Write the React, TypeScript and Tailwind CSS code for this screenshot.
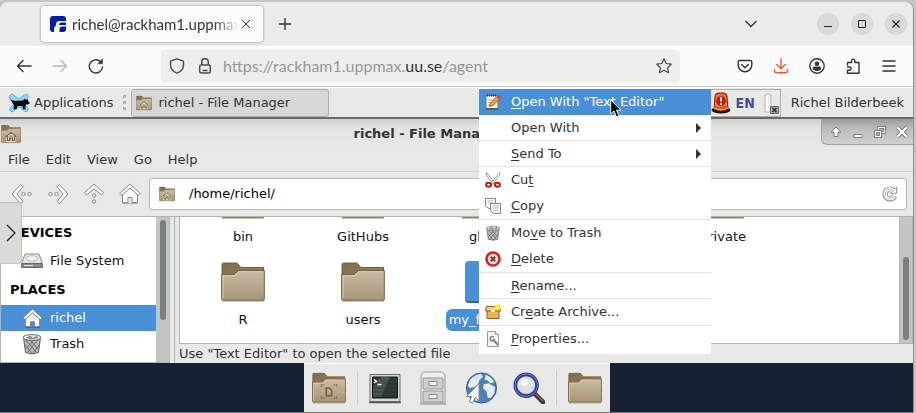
import React from "react";

type Shape = { className?: string };

function FolderShape({ className = "", emblem }: Shape & { emblem?: "home" | "doc" }) {
  return (
    <svg viewBox="0 0 44 40" className={className} aria-hidden="true">
      <defs>
        <linearGradient id="folderFront" x1="0" y1="0" x2="0" y2="1">
          <stop offset="0" stopColor="#c9bda8" />
          <stop offset="1" stopColor="#a89574" />
        </linearGradient>
        <linearGradient id="folderBack" x1="0" y1="0" x2="1" y2="1">
          <stop offset="0" stopColor="#7d6c50" />
          <stop offset="1" stopColor="#a08d6b" />
        </linearGradient>
      </defs>
      <path d="M1 39.3h42" stroke="#000" strokeOpacity=".25" strokeWidth="1.4" />
      <path d="M1 37V2.500Q1 1 2.500 1H16l4 4.500h22.500V37z" fill="url(#folderBack)" stroke="#7a5f35" />
      <path d="M.7 37V12.500H13l4.500-4H43.300V37q0 1.200-1.200 1.200H2Q.7 38.200.7 37z" fill="url(#folderFront)" stroke="#7a5f35" />
      <path d="M2 36.500V13.700h11.500l4.500-4H42" fill="none" stroke="#ddd3c2" strokeOpacity=".8" />
      {emblem === "home" && (
        <g fill="none">
          <path d="M10 27l12-9.500L34 27M14 26v9h5v-5h6v5h5v-9" stroke="#e6dccb" strokeWidth="5" />
          <path d="M10 26l12-9.500L34 26M14 25v9h5v-5h6v5h5v-9" stroke="#77623f" strokeWidth="2.600" />
        </g>
      )}
      {emblem === "doc" && (
        <g fill="none" stroke="#77623f" strokeWidth="1.500">
          <path d="M12 19v-3h4M28 16h4v3M12 30v3h4M28 33h4v-3" strokeDasharray="2 1" />
          <path d="M18.500 20h4l3 3v7h-7z" strokeWidth="2" />
        </g>
      )}
    </svg>
  );
}

function HomeShape({ className = "", dark = false }: Shape & { dark?: boolean }) {
  return (
    <svg viewBox="0 0 22 22" className={className} aria-hidden="true">
      <path
        d="M3.500 11v8.500h5.500v-5h4v5h5.500V11L11 5z"
        fill="#fafafa"
        stroke={dark ? "#777" : "#8b8b8b"}
      />
      <path
        d="M11 1L.8 10.400l1.800 2L11 5.300l8.400 7.100 1.800-2z"
        fill="#f7f7f7"
        stroke={dark ? "#777" : "#8b8b8b"}
      />
      <path d="M3 20.500h16" stroke="#000" strokeOpacity=".25" />
    </svg>
  );
}

function TrashShape({ className = "" }: Shape) {
  return (
    <svg viewBox="0 0 22 22" className={className} aria-hidden="true">
      <path d="M2.500 4l2 15.500q6.500 3 13 0l2-15.500z" fill="#b9bbb9" stroke="#5d5f5d" />
      <path
        d="M5 7l10 12M9 7l8 9M4.500 12l6 8M17 7L7 19M13 7l-8 9M18 12l-6 8"
        stroke="#666"
        strokeWidth=".9"
      />
      <ellipse cx="11" cy="4.500" rx="9" ry="2.900" fill="#e6e7e6" stroke="#6a6c6a" />
      <path d="M5 5l4-2.500 3 2.500 4-2.500 1 2.500-6 1.500z" fill="#8b8d8b" />
    </svg>
  );
}

function DriveShape({ className = "" }: Shape) {
  return (
    <svg viewBox="0 0 22 16" className={className} aria-hidden="true">
      <path d="M4 1h14l3.500 9.500v4H.5v-4z" fill="#e4e5e4" stroke="#888a88" />
      <path d="M1 10.500h20v4H1z" fill="#8a8c8a" stroke="#666" />
      <ellipse cx="11" cy="5.500" rx="5.500" ry="2.800" fill="#f6f6f6" stroke="#b5b5b5" />
      <path d="M3 12.500h9" stroke="#ddd" />
    </svg>
  );
}

function NotepadShape({ className = "" }: Shape) {
  return (
    <svg viewBox="0 0 16 16" className={className} aria-hidden="true">
      <path d="M1 1.500h12v13H1z" fill="#f5f5ee" stroke="#77776f" />
      <path d="M2 1.500h10" stroke="#333" strokeWidth="2" strokeDasharray="1 1" />
      <path d="M3 6h8M3 8.500h7M3 11h6" stroke="#b0b0a8" />
      <path d="M4.500 12.500l1-3.500L12 2.500l2.500 2.500L8 11.500z" fill="#f1a13c" stroke="#8a4f12" strokeWidth=".8" />
      <path d="M11.500 3l1.500-1.600q1-.9 2 .1t.2 2L14 5z" fill="#e2403a" />
      <path d="M1 15h12" stroke="#3b3b36" />
    </svg>
  );
}

function ScissorsShape({ className = "" }: Shape) {
  return (
    <svg viewBox="0 0 16 16" className={className} aria-hidden="true">
      <path d="M1.500.5L10.500 12l-1.500.5L1 3z" fill="#eee" stroke="#8c8e8c" strokeWidth=".8" />
      <path d="M14.500.5L5.500 12l1.500.5L15 3z" fill="#f5f5f5" stroke="#8c8e8c" strokeWidth=".8" />
      <ellipse cx="3.600" cy="12.700" rx="2.500" ry="2" fill="none" stroke="#cc1111" strokeWidth="2" />
      <ellipse cx="12.400" cy="12.700" rx="2.500" ry="2" fill="none" stroke="#cc1111" strokeWidth="2" />
    </svg>
  );
}

function CopyShape({ className = "" }: Shape) {
  return (
    <svg viewBox="0 0 16 16" className={className} aria-hidden="true">
      <path d="M.5.5h10v10H4L.5 8z" fill="#fbfbfb" stroke="#858785" />
      <path d="M2.500 3h6M2.500 5h6" stroke="#b5b7b5" />
      <path d="M5.500 5.500h10v10H9L5.500 13z" fill="#fbfbfb" stroke="#858785" />
      <path d="M7.500 8h6M7.500 10h6M9 12.500h4" stroke="#b5b7b5" />
    </svg>
  );
}

function DeleteShape({ className = "" }: Shape) {
  return (
    <svg viewBox="0 0 16 16" className={className} aria-hidden="true">
      <circle cx="8" cy="8" r="6.500" fill="#f3f3f3" stroke="#dd1f1f" strokeWidth="2.600" />
      <circle cx="8" cy="8" r="4.700" fill="#e8e8e8" stroke="#bbb" strokeWidth=".5" />
      <path d="M5.800 5.800l4.400 4.400M10.200 5.800l-4.400 4.400" stroke="#4b4d4b" strokeWidth="2.200" />
    </svg>
  );
}

function ArchiveShape({ className = "" }: Shape) {
  return (
    <svg viewBox="0 0 16 16" className={className} aria-hidden="true">
      <path d="M2 6h12v8.500H2z" fill="#e8b25a" stroke="#9a5e0c" />
      <path d="M1.500 2.500h13l1 4.500H.5z" fill="#f3cf8e" stroke="#9a5e0c" />
      <path d="M6 5h4v3H6z" fill="#fff2d0" />
      <circle cx="12.500" cy="3.300" r="3" fill="#fbf00c" />
      <circle cx="12.500" cy="3.300" r="1.200" fill="#ffffc0" />
    </svg>
  );
}

function PropertiesShape({ className = "" }: Shape) {
  return (
    <svg viewBox="0 0 16 16" className={className} aria-hidden="true">
      <path d="M2.500.5h8l3 3v12h-11z" fill="#f4f5f4" stroke="#9a9c9a" />
      <path d="M10.500.5v3h3" fill="#ddd" stroke="#9a9c9a" />
      <path d="M8.500 9l4 4.500" stroke="#8a8c8a" strokeWidth="2.200" strokeLinecap="round" />
      <circle cx="7.300" cy="7.800" r="2.200" fill="none" stroke="#8a8c8a" strokeWidth="1.500" strokeDasharray="11 3" />
    </svg>
  );
}

function TabStrip() {
  return (
    <div className="flex h-11 items-center rounded-t-lg bg-[#ebebeb] pr-1.5 pl-[41px] text-[#333338]">
      <div className="flex h-9 w-[222px] items-center rounded bg-[#fcfcfc] pr-3 pl-[9px] shadow-[0_0_3px_rgba(0,0,0,0.4)]">
        <svg viewBox="0 0 16 16" className="size-4 shrink-0" aria-hidden="true">
          <rect width="16" height="16" rx="3" fill="#00209f" />
          <path d="M4 16v-3a4 4 0 012-3.600V8.500A3.500 3.500 0 019 5h7v1.500h-4.500A2.500 2.500 0 009 9h7v1.500h-4A2.500 2.500 0 009.500 13v3z" fill="#fcfcfc" />
        </svg>
        <span className="ml-1.5 flex-1 overflow-hidden mask-r-from-85% text-[15px] whitespace-nowrap">
          richel@rackham1.uppmax.uu.se
        </span>
        <button aria-label="Close tab" className="ml-0.5">
          <svg viewBox="0 0 10 10" className="size-2.5" fill="none" stroke="currentColor" aria-hidden="true">
            <path d="M1 1l8 8M9 1L1 9" />
          </svg>
        </button>
      </div>
      <button aria-label="New tab" className="ml-4">
        <svg viewBox="0 0 12 12" className="size-3" fill="none" stroke="currentColor" strokeWidth="1.400" aria-hidden="true">
          <path d="M6 0v12M0 6h12" />
        </svg>
      </button>
      <button aria-label="List all tabs" className="mr-[60px] ml-auto">
        <svg viewBox="0 0 12 8" className="h-2 w-3" fill="none" stroke="currentColor" strokeWidth="1.300" aria-hidden="true">
          <path d="M.5 1L6 6.500 11.500 1" />
        </svg>
      </button>
      <div className="flex gap-3">
        <button aria-label="Minimize" className="grid size-[22px] place-items-center rounded-full bg-[#dadada]">
          <svg viewBox="0 0 8 8" className="size-2" stroke="#222" aria-hidden="true">
            <path d="M0 6.500h8" />
          </svg>
        </button>
        <button aria-label="Maximize" className="grid size-[22px] place-items-center rounded-full bg-[#dadada]">
          <svg viewBox="0 0 8 8" className="size-2" fill="none" stroke="#222" aria-hidden="true">
            <path d="M.5.5h7v7h-7z" />
          </svg>
        </button>
        <button aria-label="Close window" className="grid size-[22px] place-items-center rounded-full bg-[#dadada]">
          <svg viewBox="0 0 8 8" className="size-2" fill="none" stroke="#222" strokeWidth="1.200" aria-hidden="true">
            <path d="M.5.5l7 7M7.500.5l-7 7" />
          </svg>
        </button>
      </div>
    </div>
  );
}

function NavButton({ label, className = "", children }: { label: string; className?: string; children: React.ReactNode }) {
  return (
    <button aria-label={label} className={`grid h-8 w-9 place-items-center ${className}`}>
      <svg viewBox="0 0 16 16" className="size-4" fill="none" stroke="currentColor" strokeWidth="1.400" strokeLinecap="round" strokeLinejoin="round" aria-hidden="true">
        {children}
      </svg>
    </button>
  );
}

function BrowserToolbar() {
  return (
    <div className="flex h-[41px] items-center border-b border-[#c4c4c4] bg-[#fbfbfb] px-1.5 text-[#333338]">
      <NavButton label="Back">
        <path d="M15 8H1.500M7 2.500L1.500 8 7 13.500" />
      </NavButton>
      <NavButton label="Forward" className="text-[#b8b8b8]">
        <path d="M1 8h13.500M9 2.500L14.500 8 9 13.500" />
      </NavButton>
      <NavButton label="Reload">
        <path d="M14.500 9A6.600 6.600 0 1112.500 3.600" />
        <path d="M14.500 1.300v4.500H10z" fill="currentColor" strokeWidth=".6" />
      </NavButton>
      <div className="mx-[47px] flex h-8 min-w-0 flex-1 items-center rounded bg-[#eeeeee] px-2">
        <svg viewBox="0 0 16 16" className="size-4 shrink-0" fill="none" stroke="#4c4c50" strokeWidth="1.400" strokeLinejoin="round" aria-hidden="true">
          <path d="M8 .8l6.500 2.400v3.300c0 4-2.500 7.200-6.500 8.700C4 13.700 1.500 10.500 1.500 6.500V3.200z" />
        </svg>
        <svg viewBox="0 0 16 16" className="ml-3 size-4 shrink-0" fill="none" stroke="#4c4c50" strokeWidth="1.500" aria-hidden="true">
          <rect x="2.700" y="7" width="10.600" height="8" rx="1.500" />
          <path d="M4.700 7V4a3.300 3.300 0 016.600 0v3M5.500 12.500h5" />
        </svg>
        <div
          role="textbox"
          aria-label="Address"
          tabIndex={0}
          className="ml-2.5 min-w-0 flex-1 overflow-hidden text-base whitespace-nowrap text-[#97979a]"
        >
          https://rackham1.uppmax.<span className="text-[#333338]">uu.se</span>/agent
        </div>
        <button aria-label="Bookmark this page">
          <svg viewBox="0 0 16 16" className="size-4" fill="none" stroke="#4c4c50" strokeWidth="1.200" strokeLinejoin="round" aria-hidden="true">
            <path d="M8 .9l2.200 4.600 5 .7-3.600 3.500.9 5L8 12.300l-4.500 2.400.9-5L.8 6.200l5-.7z" />
          </svg>
        </button>
      </div>
      <NavButton label="Save to Pocket">
        <path d="M2.500 2.500h11a1.300 1.300 0 011.300 1.300V7a6.800 6.800 0 01-13.600 0V3.800a1.300 1.300 0 011.300-1.300zM4.700 6.500L8 9.700l3.300-3.200" />
      </NavButton>
      <NavButton label="Downloads" className="text-[#f0592b]">
        <path d="M8 1v9.500M3.800 6.500L8 10.700l4.200-4.200M1.500 11.500V13A1.700 1.700 0 003.200 14.700h9.600A1.700 1.700 0 0014.500 13v-1.500" />
      </NavButton>
      <NavButton label="Account">
        <circle cx="8" cy="8" r="7.200" />
        <circle cx="8" cy="5.700" r="2.300" fill="currentColor" stroke="none" />
        <path d="M4.500 9h7v2.500Q8 14 4.500 11.500z" fill="currentColor" strokeWidth=".8" />
      </NavButton>
      <NavButton label="Extensions">
        <path d="M2.500 7V4.500h4V2.800a1.700 1.700 0 013.400 0v1.700H14v10.700H2.500v-3h2a1.600 1.600 0 000-3.200h-2" />
      </NavButton>
      <NavButton label="Open menu">
        <path d="M2 3h12M2 8h12M2 13h12" />
      </NavButton>
    </div>
  );
}

function DesktopPanel() {
  return (
    <div className="flex h-8 items-center border-t border-t-white border-b-2 border-b-[#6a6a6a] bg-[#e8e8e6]">
      <button className="flex items-center gap-[3px] pl-[7px]">
        <svg viewBox="0 0 24 20" className="h-5 w-6" aria-hidden="true">
          <path d="M5 1l7 5 7-5q3 1 2 4l-5 5 5 5q1 3-2 4l-7-5-7 5q-3-1-2-4l5-5-5-5Q2 2 5 1z" fill="#8fd8f5" stroke="#52b5e0" />
          <path d="M.5 3l3.500 4 4 .8 8-.3 1.500-2 1.500 1.500 1.500-1 1 2.500 1.500 1.500-2 1.500h-2l-1 4h1v.8h-3l-.5-3-5-.3-1 3.300H6.500l.5-4-2.500-4z" fill="#0b0b0b" />
        </svg>
        <span>Applications</span>
      </button>
      <span className="mr-[5px] ml-2.5 flex w-[3px] flex-col gap-[3px]">
        <span className="h-[3px] bg-[#b4b4b2]" />
        <span className="h-[3px] bg-[#b4b4b2]" />
        <span className="h-[3px] bg-[#b4b4b2]" />
      </span>
      <button className="flex h-7 w-[198px] items-center gap-1.5 rounded-[3px] border border-[#adada9] bg-[#d7d7d5] pl-1">
        <FolderShape emblem="home" className="size-4" />
        <span>richel - File Manager</span>
      </button>
      <div className="ml-auto flex h-7 items-center border border-[#adada9] pr-px pl-1">
        <svg viewBox="0 0 20 22" className="size-[22px]" aria-hidden="true">
          <ellipse cx="10" cy="18" rx="9.500" ry="3.500" fill="#17170f" />
          <path d="M3 17L4 4q.3-3 3-3h6q2.700 0 3 3l1 13q-7 3.500-14 0z" fill="#e04a18" stroke="#9c2504" />
          <path d="M4 14l1-9q.3-2.500 2-2.500h6q1.700 0 2 2.500l1 9q-6 2-12 0z" fill="#ef7d31" />
          <path d="M2 15.500q8 4.500 16 0" stroke="#f0b13c" strokeWidth="1.300" fill="none" />
          <circle cx="10" cy="9" r="4.800" fill="#c3170a" />
          <path d="M10 5.200v4.600M10 11v2" stroke="#fff" strokeWidth="1.900" />
        </svg>
        <span className="ml-1 font-['DejaVu_Sans_Condensed','DejaVu_Sans',sans-serif] text-[14px] font-bold text-[#414f9f]">EN</span>
        <svg viewBox="0 0 16 22" className="ml-2 h-[22px] w-4" aria-hidden="true">
          <path d="M2 3q3-2.500 6 0v17H2z" fill="#ececea" stroke="#b9b9b7" />
          <path d="M4 4v15" stroke="#fff" strokeWidth="1.500" />
          <path d="M7.500 14.500h8v7h-8z" fill="#a5a7a3" stroke="#676965" />
          <path d="M9.500 16l4 4M13.500 16l-4 4" stroke="#33352f" strokeWidth="1.600" />
        </svg>
      </div>
      <button className="mr-[9px] ml-2.5">Richel Bilderbeek</button>
    </div>
  );
}

function TitleBar() {
  return (
    <div className="flex h-[29px] items-center bg-linear-to-b from-[#cfcfcd] via-[#e3e3e1] via-30% to-[#e8e8e6]">
      <FolderShape emblem="home" className="ml-px h-5 w-5" />
      <h1 className="flex-1 pl-4 text-center font-bold">richel - File Manager</h1>
      <div className="flex h-[26px] items-center gap-2.5 self-start rounded-bl-md border-b border-l border-[#a5a5a3] bg-linear-to-b from-[#9c9c9a] via-[#bdbdbb] via-40% to-[#d0d0ce] pr-[5px] pl-2">
        <button aria-label="Roll up">
          <svg viewBox="0 0 12 12" className="size-3" aria-hidden="true">
            <path d="M6 1l5 5H8v4.500H4V6H1z" fill="#fff" stroke="#7b7b79" />
          </svg>
        </button>
        <button aria-label="Minimize file manager">
          <svg viewBox="0 0 12 12" className="size-3" aria-hidden="true">
            <path d="M2 8.500h8v3H2z" fill="#fff" stroke="#7b7b79" />
          </svg>
        </button>
        <button aria-label="Restore file manager">
          <svg viewBox="0 0 12 12" className="size-3" aria-hidden="true">
            <path d="M3.500.5h8v7h-8z" fill="#fff" stroke="#7b7b79" />
            <path d="M5.500 2.500h4v3h-4z" fill="#bbb" stroke="#7b7b79" />
            <path d="M.5 4.500h7v7h-7z" fill="#fff" stroke="#7b7b79" />
            <path d="M2.500 6.500h3v3h-3z" fill="#bbb" stroke="#7b7b79" />
          </svg>
        </button>
        <button aria-label="Close file manager">
          <svg viewBox="0 0 12 12" className="size-3" aria-hidden="true">
            <path d="M1.500 1.500l9 9M10.500 1.500l-9 9" stroke="#7b7b79" strokeWidth="4" />
            <path d="M1.500 1.500l9 9M10.500 1.500l-9 9" stroke="#fff" strokeWidth="2.200" />
          </svg>
        </button>
      </div>
    </div>
  );
}

function ArrowShape({ turn }: { turn: string }) {
  return (
    <svg viewBox="0 0 22 22" className={`size-[22px] ${turn}`} fill="#f6f6f5" stroke="#8b8b89" aria-hidden="true">
      <path d="M9.500 1.500L12 3.500 6 11l6 7.500-2.500 2L1 11z" />
      <circle cx="12.500" cy="11" r="1.700" />
      <circle cx="18.500" cy="11" r="1.700" />
    </svg>
  );
}

function PathToolbar() {
  return (
    <div className="flex h-[45px] items-center border-b border-[#b3b3af] pr-1.5 pl-[11px]">
      <div className="flex w-[138px] gap-3.5">
        <button aria-label="Previous folder">
          <ArrowShape turn="" />
        </button>
        <button aria-label="Next folder">
          <ArrowShape turn="rotate-180" />
        </button>
        <button aria-label="Parent folder">
          <ArrowShape turn="rotate-90" />
        </button>
        <button aria-label="Home folder">
          <HomeShape className="size-[22px]" />
        </button>
      </div>
      <div className="flex h-8 flex-1 items-center rounded-[3px] border border-[#b3b3af] bg-white pr-2 pl-[9px]">
        <FolderShape emblem="home" className="h-4 w-4" />
        <input aria-label="Location" defaultValue="/home/richel/" className="ml-3.5 min-w-0 flex-1 text-black outline-none" />
        <button aria-label="Reload folder">
          <svg viewBox="0 0 16 16" className="size-4" fill="none" aria-hidden="true">
            <path d="M13.500 10.500A6 6 0 118 2q2.500 0 4 1.500" stroke="#8f8f8f" strokeWidth="3.200" />
            <path d="M14.700.8v6.500H8.300z" fill="#fff" stroke="#8f8f8f" />
            <path d="M13.200 10.600A5.800 5.800 0 118 2q2.500 0 4.200 2.500" stroke="#fff" strokeWidth="1.500" />
            <path d="M8 5.500a2.800 2.800 0 102.800 3.300" stroke="#8f8f8f" />
          </svg>
        </button>
      </div>
    </div>
  );
}

function SideRow({ icon, label, active = false }: { icon: React.ReactNode; label: string; active?: boolean }) {
  return (
    <button className={`flex h-[26px] w-full items-center gap-[7px] pl-5 ${active ? "bg-[#4a90d9] text-white" : "text-[#111]"}`}>
      <span className="grid w-[22px] place-items-center">{icon}</span>
      {label}
    </button>
  );
}

function Sidebar() {
  return (
    <aside className="flex w-[170px] shrink-0 border-b border-l border-[#b3b3af]">
      <div className="flex-1 bg-white text-black">
        <h2 className="flex h-[31px] items-center pl-[9px] font-bold">DEVICES</h2>
        <SideRow icon={<DriveShape className="h-4 w-[22px]" />} label="File System" />
        <h2 className="flex h-[31px] items-center pl-[9px] font-bold">PLACES</h2>
        <SideRow active icon={<HomeShape dark className="size-[21px]" />} label="richel" />
        <SideRow icon={<TrashShape className="size-[22px]" />} label="Trash" />
      </div>
      <div className="w-3.5 border-r border-[#b3b3af] bg-[#c3c5c4] px-1 pt-[3px]">
        <div className="h-[100px] w-1.5 rounded-full bg-[#7b7f7e]" />
      </div>
    </aside>
  );
}

function FileCell({ name, selected = false }: { name: string; selected?: boolean }) {
  return (
    <button className="flex w-[120px] flex-col items-center">
      {selected ? (
        <span className="h-[42px] w-9 rounded-sm border-b-2 border-[#2a66a5] bg-[#4a90d9]" />
      ) : (
        <FolderShape className="h-[42px] w-11" />
      )}
      <span className={`mt-1.5 rounded-md px-[3px] leading-[22px] ${selected ? "bg-[#4a90d9] text-white" : "text-[#111]"}`}>{name}</span>
    </button>
  );
}

function FileArea() {
  return (
    <section className="ml-1 flex min-w-0 flex-1 flex-col border-l border-[#b3b3af] pl-1">
      <div className="flex h-[127px] border-b border-l border-[#b3b3af]">
        <div className="flex-1 overflow-hidden bg-white pl-[3px]">
          <div className="-mt-[39px] flex">
            <FileCell name="bin" />
            <FileCell name="GitHubs" />
            <FileCell name="glob" />
            <span className="w-[120px]" />
            <FileCell name="private" />
          </div>
          <div className="mt-[13px] flex">
            <FileCell name="R" />
            <FileCell name="users" />
            <FileCell name="my_file.txt" selected />
          </div>
        </div>
        <div className="flex w-3.5 items-end border-x border-[#b3b3af] bg-[#c3c5c4] px-[3px] pb-[3px]">
          <div className="h-[83px] w-1.5 rounded-full bg-[#7b7f7e]" />
        </div>
      </div>
      <p className="flex h-[19px] items-center">Use "Text Editor" to open the selected file</p>
    </section>
  );
}

function FileManager() {
  return (
    <main className="bg-[#e8e8e6]">
      <TitleBar />
      <nav className="flex h-6 items-center gap-4 border-b border-[#d2d2cf] pl-2">
        <button>File</button>
        <button>Edit</button>
        <button>View</button>
        <button>Go</button>
        <button>Help</button>
      </nav>
      <PathToolbar />
      <div className="flex">
        <Sidebar />
        <FileArea />
      </div>
    </main>
  );
}

function Dock() {
  return (
    <footer className="flex flex-1 justify-center border-b border-[#77797b] bg-[#162233]">
      <div className="flex items-center border-t border-white bg-[#e8e8e6] px-2">
        <button aria-label="Home folder shortcut">
          <FolderShape emblem="doc" className="h-8 w-[34px]" />
        </button>
        <span className="mx-[11px] h-[34px] w-px bg-[#cdcdca]" />
        <div className="flex items-center gap-4">
          <button aria-label="Terminal">
            <svg viewBox="0 0 32 32" className="size-8" aria-hidden="true">
              <path d="M1 2.500h30v27H1z" fill="#d9dad8" stroke="#6a6c69" />
              <path d="M3.500 5h25v21h-25z" fill="#2f3d3a" stroke="#111" />
              <path d="M12 5h9l-9 20H4V15z" fill="#485652" />
              <path d="M4 12h25M4 16h25M4 20h25M4 24h25" stroke="#1c2624" strokeOpacity=".5" />
              <path d="M5 7.500l2.500 1.800L5 11M8.500 12.500h4" fill="none" stroke="#fff" strokeWidth="1.300" />
              <path d="M0 30.500h32" stroke="#555" strokeWidth="1.500" />
            </svg>
          </button>
          <button aria-label="File cabinet">
            <svg viewBox="0 0 32 34" className="h-[34px] w-8" aria-hidden="true">
              <path d="M4 7q0-6 4-6h16q4 0 4 6v25H4z" fill="#eeefed" stroke="#999b98" />
              <path d="M6 7h20v11H6zM6 20h20v11H6z" fill="#cfd0ce" stroke="#969895" />
              <path d="M12 10.500h8v4h-8zM12 23.500h8v4h-8z" fill="#f4f4f3" stroke="#888a87" />
              <path d="M3 33h26" stroke="#aaa" strokeWidth="1.500" />
            </svg>
          </button>
          <button aria-label="Web browser">
            <svg viewBox="0 0 34 34" className="size-8" aria-hidden="true">
              <circle cx="17.500" cy="17" r="16" fill="#4f7fb9" stroke="#315a93" />
              <path d="M5 9q5-7 12-7l2 3-4 4-1 4-4 3-5 1-2-3zM22 3q6 2 9 8l-4 1-3-3-3-1zM20 13l5-1 7 4-1 7-4 5-3-1-1-6-4-4z" fill="#e3edf6" />
              <path d="M8 6l4 3 3-5M23 7l4-1M5 22l5 8 5 1-5-9z" fill="#c9dcee" />
              <path d="M15 12v19l-4-4-3 6-3.500-1.500L7 26H1.500z" fill="#f6f6f6" stroke="#777" />
            </svg>
          </button>
          <button aria-label="Application finder">
            <svg viewBox="0 0 34 34" className="size-8" aria-hidden="true">
              <path d="M22 22l10 10" stroke="#3b3632" strokeWidth="5" strokeLinecap="round" />
              <path d="M24 23l8 8" stroke="#7e746b" strokeWidth="1.500" />
              <circle cx="14" cy="14" r="11.500" fill="#dde0e1" stroke="#343e9c" strokeWidth="4" />
              <circle cx="14" cy="14" r="12" fill="none" stroke="#6f7cd0" />
              <circle cx="12" cy="11" r="4" fill="#fafafa" />
            </svg>
          </button>
        </div>
        <span className="mx-[11px] h-[34px] w-px bg-[#cdcdca]" />
        <button aria-label="Folder shortcut">
          <FolderShape className="h-8 w-[34px]" />
        </button>
      </div>
    </footer>
  );
}

type ItemProps = {
  icon?: React.ReactNode;
  children: React.ReactNode;
  line?: boolean;
  tall?: boolean;
  active?: boolean;
  submenu?: boolean;
};

function MenuItem({ icon, children, line, tall, active, submenu }: ItemProps) {
  return (
    <button
      role="menuitem"
      className={`flex w-full items-center pr-2.5 pl-1.5 text-left ${tall ? "h-[27px]" : "h-[26px]"} ${line ? "border-b border-[#e2e2e2]" : ""} ${active ? "bg-[#4a90d9] text-white" : ""}`}
    >
      <span className="mr-2.5 size-4">{icon}</span>
      <span className="underline-offset-2">{children}</span>
      {submenu && (
        <svg viewBox="0 0 5 10" className="ml-auto h-2.5 w-[5px]" fill="#2e3436" aria-hidden="true">
          <path d="M0 0l5 5-5 5z" />
        </svg>
      )}
    </button>
  );
}

function ContextMenu() {
  return (
    <div role="menu" className="absolute top-[88px] left-[479px] w-[232px] bg-white pt-px pb-0.5">
      <MenuItem active icon={<NotepadShape className="size-4" />}><u>O</u>pen With "Text Editor"</MenuItem>
      <MenuItem line submenu>Open With</MenuItem>
      <MenuItem line submenu><u>S</u>end To</MenuItem>
      <MenuItem icon={<ScissorsShape className="size-4" />}>Cu<u>t</u></MenuItem>
      <MenuItem line tall icon={<CopyShape className="size-4" />}><u>C</u>opy</MenuItem>
      <MenuItem icon={<TrashShape className="size-4" />}>Mo<u>v</u>e to Trash</MenuItem>
      <MenuItem line tall icon={<DeleteShape className="size-4" />}><u>D</u>elete</MenuItem>
      <MenuItem line><u>R</u>ename...</MenuItem>
      <MenuItem line tall icon={<ArchiveShape className="size-4" />}>Cr<u>e</u>ate Archive...</MenuItem>
      <MenuItem icon={<PropertiesShape className="size-4" />}><u>P</u>roperties...</MenuItem>
      <svg viewBox="0 0 12 19" className="absolute top-[11px] left-[131px] h-[19px] w-3" aria-hidden="true">
        <path d="M.7.900v14l3.300-3 2.500 6 2.500-1-2.500-5.700h4.600z" fill="#0a0a0a" stroke="#fff" strokeWidth=".9" />
      </svg>
    </div>
  );
}

export default function App() {
  return (
    <div className="relative flex min-h-screen flex-col bg-[#c6c6c6] pt-[2px] pr-[2px] font-['DejaVu_Sans',sans-serif] text-[13px] leading-5 text-[#2e3436]">
      <div className="flex flex-1 flex-col rounded-t-lg border-r border-[#8f8f8f]">
        <div className="font-[Lato,'Noto_Sans',sans-serif]">
          <TabStrip />
          <BrowserToolbar />
        </div>
        <DesktopPanel />
        <FileManager />
        <Dock />
      </div>
      <button
        aria-label="Show control bar"
        className="absolute top-[202px] left-0 grid h-[62px] w-[22px] place-items-center rounded-r border border-l-0 border-[#c4c4c0] bg-[#dadad6]"
      >
        <svg viewBox="0 0 10 18" className="h-[18px] w-2.5" fill="none" stroke="#222" strokeWidth="1.300" aria-hidden="true">
          <path d="M1 1l8 8-8 8" />
        </svg>
      </button>
      <ContextMenu />
    </div>
  );
}
